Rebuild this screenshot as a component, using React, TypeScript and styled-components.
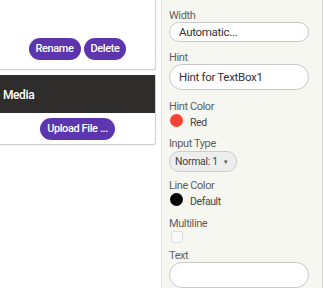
import React from "react";
import styled, { createGlobalStyle } from "styled-components";

const Global = createGlobalStyle`
  html, body { margin: 0; padding: 0; background: #ffffff; }
  body { font-family: Roboto, "Liberation Sans", Arial, sans-serif; }
  * { box-sizing: border-box; }
`;

const Page = styled.div`
  display: flex;
  width: 324px;
  height: 288px;
  overflow: hidden;
  background: #ffffff;
`;

const LeftColumn = styled.div`
  width: 162px;
  flex: none;
  border-right: 1px solid #e2e2e2;
  display: flex;
  flex-direction: column;
`;

const Card = styled.div`
  width: 156px;
  background: #ffffff;
  border-right: 1px solid #d0d0d0;
  border-bottom: 1px solid #d0d0d0;
  border-bottom-right-radius: 3px;
  box-shadow: 0 1px 1px rgba(0, 0, 0, 0.06);
`;

const TopCard = styled(Card)`
  height: 70px;
  display: flex;
  justify-content: center;
  align-items: flex-start;
  gap: 3px;
  padding: 38px 0 0 0;
`;

const MediaCard = styled(Card)`
  margin-top: 5px;
`;

const MediaHeader = styled.div`
  height: 38px;
  background: #2f2d2b;
  color: #ffffff;
  font-size: 12px;
  font-weight: 500;
  letter-spacing: -0.4px;
  display: flex;
  align-items: center;
  padding: 2px 0 0 3px;
`;

const MediaBody = styled.div`
  height: 31px;
  display: flex;
  justify-content: center;
  padding: 5px 0 0 0;
`;

const PillButton = styled.button`
  height: 22px;
  padding: 0 7px;
  border: none;
  border-radius: 11px;
  background: #5d35ae;
  color: #ffffff;
  font-family: Roboto, "Liberation Sans", Arial, sans-serif;
  font-size: 11px;
  font-weight: 500;
  letter-spacing: -0.4px;
  line-height: 22px;
  white-space: nowrap;
  cursor: pointer;
`;

const Panel = styled.div`
  width: 161px;
  flex: none;
  background: #f7f7f2;
  border-right: 1px solid #dcdcd6;
  padding: 0 0 0 7px;
  display: flex;
  flex-direction: column;
  align-items: flex-start;
`;

const Label = styled.div<{ $top: number }>`
  margin-top: ${(p) => p.$top}px;
  height: 12px;
  font-size: 11px;
  letter-spacing: -0.4px;
  line-height: 12px;
  color: #5f5f5f;
`;

const TextInput = styled.div<{ $h: number }>`
  width: 140px;
  height: ${(p) => p.$h}px;
  background: #ffffff;
  border: 1px solid #c9c9c9;
  border-radius: 13px;
  padding: 0 0 0 9px;
  display: flex;
  align-items: center;
  font-size: 11.5px;
  letter-spacing: -0.3px;
  color: #333333;
`;

const ColorRow = styled.div`
  margin-top: 1px;
  height: 13px;
  display: flex;
  align-items: center;
  gap: 7px;
  padding-left: 1px;
  font-size: 10.5px;
  letter-spacing: -0.4px;
  color: #444444;
`;

const Swatch = styled.span<{ $color: string }>`
  width: 13px;
  height: 13px;
  border-radius: 50%;
  background: ${(p) => p.$color};
  flex: none;
`;

const ColorName = styled.span`
  padding-top: 3px;
`;

const Dropdown = styled.div`
  margin-top: 1px;
  height: 21px;
  background: #eeeeee;
  border: 1px solid #cccccc;
  border-radius: 10px;
  display: flex;
  align-items: center;
  gap: 5px;
  padding: 0 7px 0 5px;
  font-size: 10.5px;
  letter-spacing: -0.3px;
  color: #444444;
  white-space: nowrap;
`;

const Caret = styled.span`
  font-size: 6px;
  color: #555555;
`;

const Checkbox = styled.div`
  margin: 1px 0 0 2px;
  width: 12px;
  height: 12px;
  border: 1px solid #dddddd;
  border-radius: 3px;
  background: #f9f9f9;
`;

export default function App() {
  return (
    <>
      <Global />
      <Page>
        <LeftColumn>
          <TopCard>
            <PillButton>Rename</PillButton>
            <PillButton>Delete</PillButton>
          </TopCard>
          <MediaCard>
            <MediaHeader>Media</MediaHeader>
            <MediaBody>
              <PillButton>Upload File ...</PillButton>
            </MediaBody>
          </MediaCard>
        </LeftColumn>
        <Panel>
          <Label $top={10}>Width</Label>
          <TextInput $h={20}>Automatic...</TextInput>
          <Label $top={10}>Hint</Label>
          <TextInput $h={26}>Hint for TextBox1</TextInput>
          <Label $top={11}>Hint Color</Label>
          <ColorRow>
            <Swatch $color="#f44336" />
            <ColorName>Red</ColorName>
          </ColorRow>
          <Label $top={11}>Input Type</Label>
          <Dropdown>
            <span>Normal: 1</span>
            <Caret>▼</Caret>
          </Dropdown>
          <Label $top={8}>Line Color</Label>
          <ColorRow>
            <Swatch $color="#000000" />
            <ColorName>Default</ColorName>
          </ColorRow>
          <Label $top={12}>Multiline</Label>
          <Checkbox />
          <Label $top={7}>Text</Label>
          <TextInput $h={26} />
        </Panel>
      </Page>
    </>
  );
}
